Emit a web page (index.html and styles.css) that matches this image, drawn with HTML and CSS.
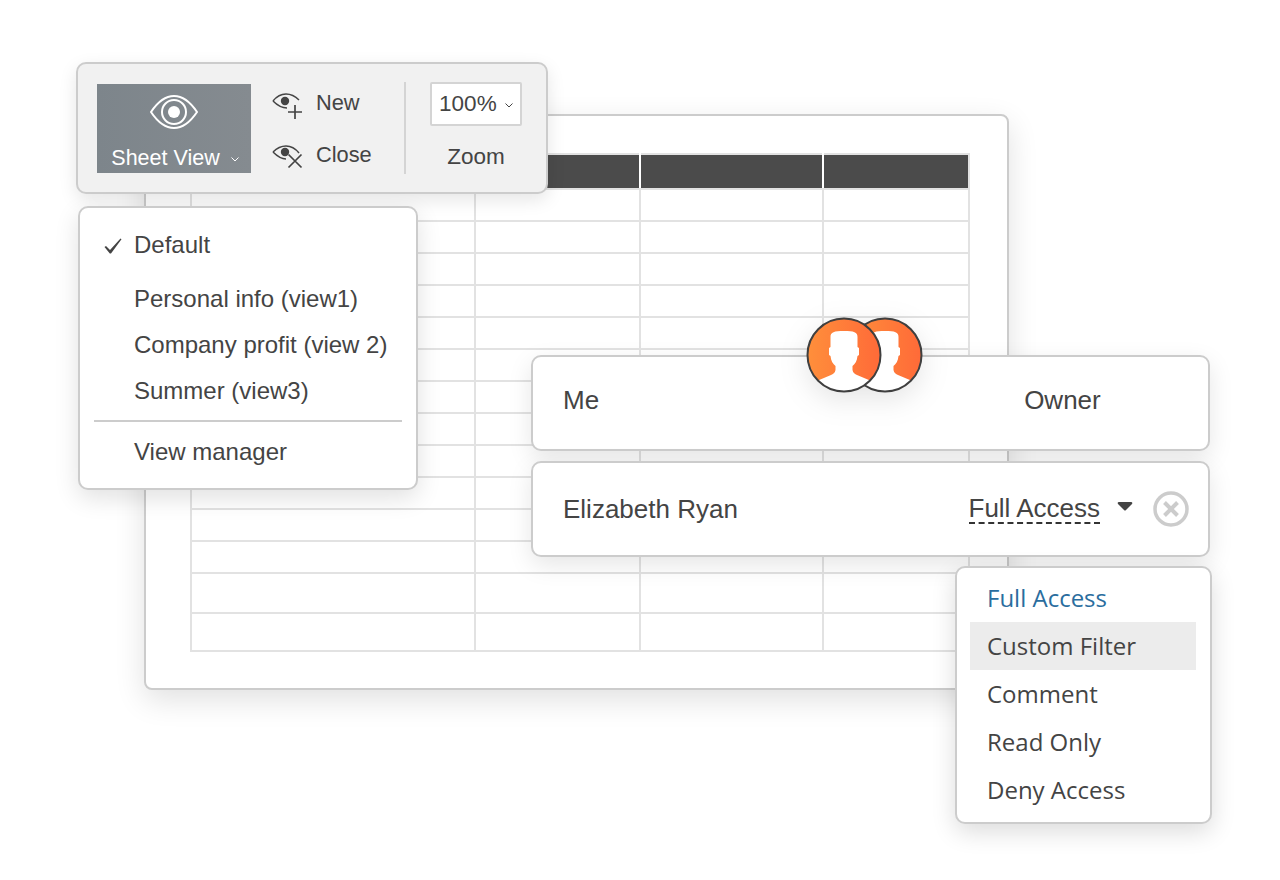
FILE: index.html
```html
<!DOCTYPE html>
<html lang="en">
<head>
    <meta charset="UTF-8">
    <title>Sheet View</title>
    <link rel="stylesheet" href="styles.css">
</head>
<body>
    <div class="stage">
        <!-- planilha de fundo -->
        <div class="sheet">
            <table class="grid">
                <tr class="head"><th></th><th></th><th></th><th></th></tr>
                <tr><td></td><td></td><td></td><td></td></tr>
                <tr><td></td><td></td><td></td><td></td></tr>
                <tr><td></td><td></td><td></td><td></td></tr>
                <tr><td></td><td></td><td></td><td></td></tr>
                <tr><td></td><td></td><td></td><td></td></tr>
                <tr><td></td><td></td><td></td><td></td></tr>
                <tr><td></td><td></td><td></td><td></td></tr>
                <tr><td></td><td></td><td></td><td></td></tr>
                <tr><td></td><td></td><td></td><td></td></tr>
                <tr><td></td><td></td><td></td><td></td></tr>
                <tr><td></td><td></td><td></td><td></td></tr>
                <tr><td></td><td></td><td></td><td></td></tr>
                <tr class="r40"><td></td><td></td><td></td><td></td></tr>
                <tr class="r38"><td></td><td></td><td></td><td></td></tr>
            </table>
        </div>

        <!-- barra de ferramentas -->
        <div class="toolbar">
            <div class="viewBtn">
                <svg width="50" height="36" viewBox="0 0 50 36" fill="none" stroke="#fff" stroke-width="2">
                    <path d="M2 18 C10 6 17 2 25 2 C33 2 40 6 48 18 C40 30 33 34 25 34 C17 34 10 30 2 18 Z"/>
                    <circle cx="25" cy="18" r="12"/>
                    <circle cx="25" cy="18" r="6" fill="#fff" stroke="none"/>
                </svg>
                <div class="viewLabel">Sheet View
                    <svg class="chev" width="8" height="5" viewBox="0 0 8 5" fill="none" stroke="#fff" stroke-width="1"><path d="M0.5 0.5 L4 4 L7.5 0.5"/></svg>
                </div>
            </div>
            <div class="actions">
                <div class="action">
                    <svg width="32" height="32" viewBox="0 0 32 32" fill="none" stroke="#444" stroke-width="1.5">
                        <path d="M2 14 C6 9 10 7 15 7 C20 7 24 9 28 13"/>
                        <path d="M2 14 C6 18 10 21 16 21"/>
                        <circle cx="14" cy="14" r="4.2" fill="#444" stroke="none"/>
                        <path d="M24 18 V32 M17 25 H31" stroke-width="1.7"/>
                    </svg>
                    <span>New</span>
                </div>
                <div class="action">
                    <svg width="32" height="32" viewBox="0 0 32 32" fill="none" stroke="#444" stroke-width="1.5">
                        <path d="M2 13 C6 9 10 7 15 7 C20 7 24 9 28 14"/>
                        <path d="M2 13 C6 17 10 20 15 20"/>
                        <circle cx="14" cy="13" r="4.200" fill="#444" stroke="none"/>
                        <path d="M17.500 15.500 L30.500 28.500 M30.500 15.500 L17.500 28.500" stroke-width="1.7"/>
                    </svg>
                    <span>Close</span>
                </div>
            </div>
            <div class="divider"></div>
            <div class="zoomBox">
                <div class="zoomSelect">100%
                    <svg class="chev" width="8" height="5" viewBox="0 0 8 5" fill="none" stroke="#444" stroke-width="1"><path d="M0.5 0.5 L4 4 L7.5 0.5"/></svg>
                </div>
                <div class="zoomLabel">Zoom</div>
            </div>
        </div>

        <!-- menu de visualizacoes -->
        <div class="viewMenu">
            <div class="viewItem first">
                <svg class="check" width="18" height="16" viewBox="0 0 18 16" fill="#444"><path d="M0.500 9 L2 8 L6 12 L16.500 0.500 L17.500 1.200 L7 15.500 L5.800 15.500 Z"/></svg>
                Default
            </div>
            <div class="viewItem">Personal info (view1)</div>
            <div class="viewItem">Company profit (view 2)</div>
            <div class="viewItem">Summer (view3)</div>
            <div class="sep"></div>
            <div class="viewItem">View manager</div>
        </div>

        <!-- permissoes -->
        <div class="userRow rowMe">
            <span>Me</span>
            <span class="ownerText">Owner</span>
        </div>
        <div class="userRow rowEli">
            <span>Elizabeth Ryan</span>
            <div class="access">
                <span class="accessText">Full Access</span>
                <svg class="caret" width="16" height="10" viewBox="0 0 16 10"><path d="M2 1 H14 Q16 1 15 3 L9 9 Q8 10 7 9 L1 3 Q0 1 2 1 Z" fill="#444"/></svg>
                <svg width="36" height="36" viewBox="0 0 36 36" fill="none" stroke="#ccc" stroke-width="3.5">
                    <circle cx="18" cy="18" r="16"/>
                    <path d="M11.500 11.500 L24.500 24.500 M24.500 11.500 L11.500 24.500" stroke-width="4"/>
                </svg>
            </div>
        </div>

        <div class="avatars">
            <svg width="120" height="78" viewBox="0 0 120 78">
                <defs>
                    <linearGradient id="orange" x1="0" x2="1" y1="0" y2="0">
                        <stop offset="0" stop-color="#ff8f3b"/>
                        <stop offset="1" stop-color="#ff6a38"/>
                    </linearGradient>
                    <clipPath id="clipA"><circle cx="39" cy="39" r="36.5"/></clipPath>
                    <clipPath id="clipB"><circle cx="80" cy="39" r="36.5"/></clipPath>
                    <path id="person" d="M-13.500 -18 C-13.500 -23 -10 -24 0 -24 C10 -24 13.500 -23 13.500 -18 L13.500 -8 L15 -7 L15 0 L13.500 1 C13 6 11 9 8.500 11 L8.500 15 C9 18 11 19 13 20 L32 28 L32 50 L-32 50 L-32 28 L-13 20 C-11 19 -9 18 -8.500 15 L-8.500 11 C-11 9 -13 6 -13.500 1 L-15 0 L-15 -7 L-13.500 -8 Z" fill="#fff"/>
                </defs>
                <circle cx="80" cy="39" r="36.500" fill="url(#orange)"/>
                <g clip-path="url(#clipB)"><use href="#person" x="80" y="39"/></g>
                <circle cx="80" cy="39" r="36.500" fill="none" stroke="#3f3f3f" stroke-width="2"/>
                <circle cx="39" cy="39" r="36.500" fill="url(#orange)"/>
                <g clip-path="url(#clipA)"><use href="#person" x="39" y="39"/></g>
                <circle cx="39" cy="39" r="36.500" fill="none" stroke="#3f3f3f" stroke-width="2"/>
            </svg>
        </div>

        <!-- menu de acesso -->
        <div class="accessMenu">
            <div class="accessItem active">Full Access</div>
            <div class="accessItem hover">Custom Filter</div>
            <div class="accessItem">Comment</div>
            <div class="accessItem">Read Only</div>
            <div class="accessItem">Deny Access</div>
        </div>
    </div>
</body>
</html>
```

FILE: styles.css
```css
body {
    margin: 0;
    background-color: #fff;
    color: #444;
    font-family: "Liberation Sans", Arial, sans-serif;
}

.stage {
    position: relative;
    width: 1280px;
    height: 880px;
    overflow: hidden;
}

.sheet {
    position: absolute;
    left: 144px;
    top: 114px;
    width: 865px;
    height: 576px;
    box-sizing: border-box;
    padding: 37px 37px 0 44px;
    background-color: #fff;
    border: 2px solid #ccc;
    border-radius: 8px;
    box-shadow: 0 10px 30px rgba(0, 0, 0, 0.12);
}

.grid {
    border-collapse: collapse;
    table-layout: fixed;
    width: 780px;
}

.grid th, .grid td {
    border: 2px solid #e2e2e2;
    padding: 0;
}

.grid th:nth-child(1) { width: 282px; }
.grid th:nth-child(2) { width: 163px; }
.grid th:nth-child(3) { width: 181px; }

.grid tr {
    height: 32px;
}

.grid .head {
    height: 35px;
}

.grid th {
    background-color: #4b4b4b;
}

.grid th:not(:last-child) {
    border-right-color: #fff;
}

.grid .r40 { height: 40px; }
.grid .r38 { height: 38px; }

.toolbar {
    position: absolute;
    left: 76px;
    top: 62px;
    width: 472px;
    height: 132px;
    box-sizing: border-box;
    display: flex;
    padding: 20px 0 0 19px;
    background-color: #f1f1f1;
    border: 2px solid #ccc;
    border-radius: 10px;
    box-shadow: 0 6px 18px rgba(0, 0, 0, 0.1);
}

.viewBtn {
    width: 154px;
    height: 89px;
    display: flex;
    flex-direction: column;
    align-items: center;
    padding-top: 10px;
    padding-left: 2px;
    box-sizing: border-box;
    background: linear-gradient(90deg, #7d858b, #858b90);
}

.viewLabel {
    margin-top: 15px;
    color: #fff;
    font-size: 21.500px;
    line-height: 26px;
    white-space: nowrap;
}

.viewLabel .chev {
    margin-left: 5px;
}

.viewBtn > svg {
    margin-left: -2px;
}

.chev {
    vertical-align: 3px;
    margin-left: 4px;
}

.actions {
    display: flex;
    flex-direction: column;
    gap: 20px;
    width: 153px;
    padding: 3px 0 0 20px;
    box-sizing: border-box;
}

.action {
    display: flex;
    align-items: center;
    gap: 13px;
    height: 32px;
    font-size: 21.800px;
}

.divider {
    width: 2px;
    height: 92px;
    margin-top: -2px;
    background-color: #d4d4d4;
}

.zoomBox {
    margin-left: 24px;
    display: flex;
    flex-direction: column;
    align-items: center;
    margin-top: -2px;
}

.zoomSelect {
    width: 92px;
    height: 44px;
    box-sizing: border-box;
    border: 2px solid #d4d4d4;
    border-radius: 2px;
    background-color: #fff;
    font-size: 22.500px;
    line-height: 40px;
    text-align: center;
    white-space: nowrap;
}

.zoomSelect .chev {
    margin-left: 2px;
}

.zoomLabel {
    margin-top: 18px;
    font-size: 22.500px;
    line-height: 26px;
}

.viewMenu {
    position: absolute;
    left: 78px;
    top: 206px;
    width: 340px;
    height: 284px;
    box-sizing: border-box;
    padding: 14px 14px 0;
    background-color: #fff;
    border: 2px solid #ccc;
    border-radius: 10px;
    box-shadow: 0 8px 24px rgba(0, 0, 0, 0.12);
}

.viewItem {
    position: relative;
    height: 46px;
    padding-left: 40px;
    font-size: 24px;
    line-height: 46px;
    white-space: nowrap;
}

.viewItem.first {
    height: 54px;
}

.check {
    position: absolute;
    left: 10px;
    top: 16px;
}

.sep {
    height: 2px;
    margin: 6px 0 7px;
    background-color: #ccc;
}

.userRow {
    position: absolute;
    left: 531px;
    width: 679px;
    height: 96px;
    box-sizing: border-box;
    display: flex;
    align-items: center;
    padding-left: 30px;
    background-color: #fff;
    border: 2px solid #ccc;
    border-radius: 10px;
    box-shadow: 0 8px 24px rgba(0, 0, 0, 0.1);
    font-size: 26px;
}

.rowMe {
    top: 355px;
    padding-bottom: 6px;
}

.rowEli {
    top: 461px;
    justify-content: space-between;
    padding-right: 19px;
}

.ownerText {
    margin-left: 425px;
}

.access {
    display: flex;
    align-items: center;
}

.accessText {
    border-bottom: 2px dashed #333;
    line-height: 28px;
}

.caret {
    margin: 0 20px 6px 17px;
}

.avatars {
    position: absolute;
    left: 805px;
    top: 316px;
    line-height: 0;
    filter: drop-shadow(0 8px 14px rgba(0, 0, 0, 0.1));
}

.accessMenu {
    position: absolute;
    left: 955px;
    top: 566px;
    width: 257px;
    height: 258px;
    box-sizing: border-box;
    padding: 6px 14px 8px 13px;
    background-color: #fff;
    border: 2px solid #ccc;
    border-radius: 10px;
    box-shadow: 0 8px 24px rgba(0, 0, 0, 0.14);
    font-family: "Open Sans", sans-serif;
    font-size: 24px;
}

.accessItem {
    height: 48px;
    padding-left: 17px;
    line-height: 48px;
}

.accessItem.active {
    color: #2a6d9e;
}

.accessItem.hover {
    background-color: #ececec;
}
```
